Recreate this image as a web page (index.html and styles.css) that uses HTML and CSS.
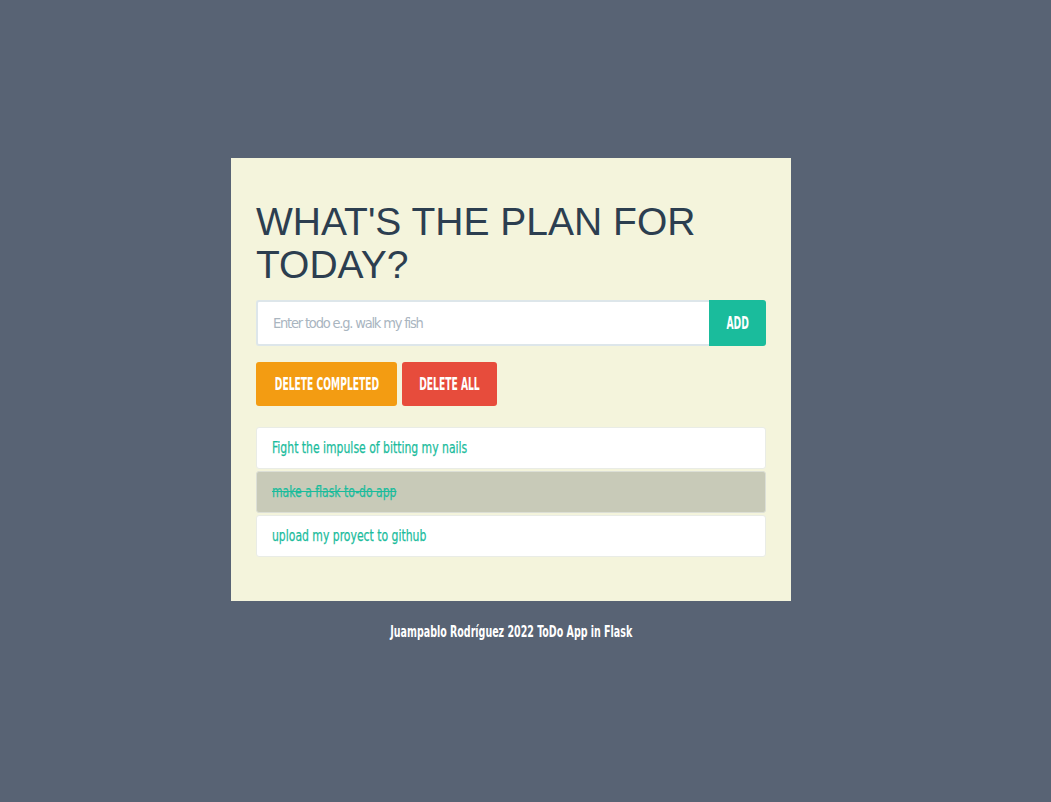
FILE: index.html
```html
<!DOCTYPE html>
<html lang="en">
<head>
<meta charset="utf-8">
<title>ToDo App in Flask</title>
<link rel="stylesheet" href="styles.css">
</head>
<body>
<main class="page">
  <section class="card">
    <h1 class="title">WHAT'S THE PLAN FOR TODAY?</h1>
    <form class="add-form">
      <input class="add-input" type="text" placeholder="Enter todo e.g. walk my fish">
      <button class="btn btn-add" type="button"><span class="txt">ADD</span></button>
    </form>
    <div class="actions">
      <button class="btn btn-orange" type="button"><span class="txt">DELETE COMPLETED</span></button>
      <button class="btn btn-red" type="button"><span class="txt">DELETE ALL</span></button>
    </div>
    <ul class="todos">
      <li class="todo"><span class="txt">Fight the impulse of bitting my nails</span></li>
      <li class="todo done"><span class="txt">make a flask to-do app</span></li>
      <li class="todo"><span class="txt">upload my proyect to github</span></li>
    </ul>
  </section>
  <footer class="footer"><span class="txt">Juampablo Rodríguez 2022 ToDo App in Flask</span></footer>
</main>
</body>
</html>
```

FILE: styles.css
```css
html, body {
  margin: 0;
  padding: 0;
  background: #586374;
  min-height: 100%;
}
body {
  font-family: "DejaVu Sans Condensed", "DejaVu Sans", sans-serif;
}
.txt {
  display: inline-block;
  white-space: nowrap;
}
.page {
  display: flex;
  flex-direction: column;
  align-items: center;
  padding: 158px 29px 0 0;
}
.card {
  box-sizing: border-box;
  width: 560px;
  background: #f4f4dc;
  padding: 43px 25px 44px 25px;
}
.title {
  margin: 0 0 13px 0;
  font-family: "Liberation Sans", Arial, sans-serif;
  font-weight: 400;
  font-size: 39px;
  line-height: 1.1;
  color: #2c3e50;
}
.add-form {
  display: flex;
  margin: 0 0 16px 0;
}
.add-input {
  flex: 1;
  min-width: 0;
  box-sizing: border-box;
  height: 46px;
  border: 2px solid #dde6ea;
  border-right: none;
  border-radius: 3px 0 0 3px;
  padding: 0 14px 0 15px;
  font-family: inherit;
  font-size: 14.5px;
  color: #34495e;
  background: #fff;
  outline: none;
}
.add-input::placeholder {
  color: #a9b5bf;
  letter-spacing: -1.2px;
}
.btn {
  display: flex;
  align-items: center;
  justify-content: center;
  border: none;
  color: #fff;
  font-family: inherit;
  font-weight: 700;
  font-size: 17px;
  padding: 0;
  height: 44px;
  border-radius: 3px;
  cursor: pointer;
  overflow: visible;
}
.btn .txt {
  transform: scaleX(0.6);
  transform-origin: center center;
}
.btn-add {
  background: #1abc9c;
  width: 57px;
  height: 46px;
  border-radius: 0 3px 3px 0;
}
.actions {
  display: flex;
  gap: 5px;
  margin: 0 0 21px 0;
}
.btn-orange {
  background: #f39c12;
  width: 141px;
}
.btn-red {
  background: #e74c3c;
  width: 95px;
}
.todos {
  list-style: none;
  margin: 0;
  padding: 0;
  display: flex;
  flex-direction: column;
  gap: 2px;
}
.todo {
  box-sizing: border-box;
  height: 42px;
  display: flex;
  align-items: center;
  padding: 0 15px;
  background: #fff;
  border: 1px solid #e9ece6;
  border-radius: 3px;
  color: #1abc9c;
  font-size: 16px;
}
.todo .txt {
  transform: scaleX(0.753);
  transform-origin: left center;
  -webkit-text-stroke: 0.25px #1abc9c;
}
.todo.done {
  background: #c8cab8;
  border-color: #dcdfd6;
}
.todo.done .txt {
  text-decoration: line-through;
}
.footer {
  margin-top: 21px;
  color: #fff;
  font-weight: 700;
  font-size: 16px;
}
.footer .txt {
  transform: scaleX(0.66);
  transform-origin: center center;
}
```
